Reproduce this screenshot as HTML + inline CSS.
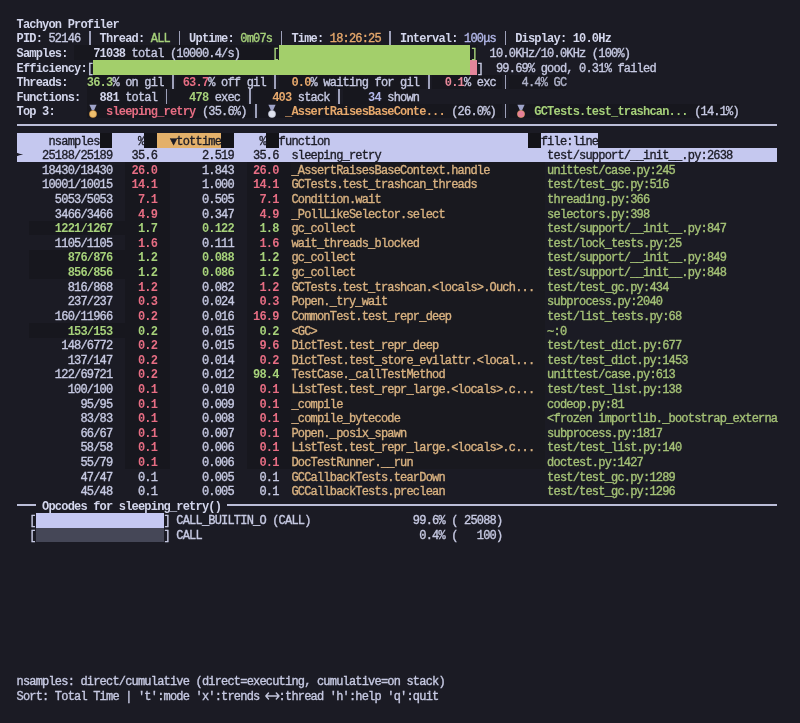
<!DOCTYPE html><html><head><meta charset="utf-8"><style>
html,body{margin:0;padding:0;background:#1b1b24;width:800px;height:723px;overflow:hidden}
#t{will-change:transform;position:relative;width:800px;height:723px;font-family:"Liberation Mono",monospace;font-size:12.0px;letter-spacing:-0.8082px}
.s{position:absolute;white-space:pre;height:14.6076px;line-height:14.6076px;-webkit-text-stroke:0.35px currentColor}
.bg{position:absolute;height:14.6076px}
.rule{position:absolute;height:1.6px}
.w{color:#c6c9e2} .wb{color:#d3d6ec;font-weight:bold;-webkit-text-stroke:0px} .b{color:#d3d6ec;font-weight:bold;-webkit-text-stroke:0px}
.bd{font-weight:bold;-webkit-text-stroke:0px} .g{color:#a6d17a} .r{color:#e66d83} .r2{color:#e8899b} .o{color:#e6a86c} .p{color:#b2b7e8}
.fn{color:#d9b281} .fl{color:#a4c176} .dk{color:#1c1c26} .dim{color:#aeb1c8} .sep{color:#9a9db2}

</style></head><body><div id="t">
<div class="bg" style="left:278.61px;top:45.47px;width:191.79px;background:#a3cf6b"></div>
<div class="bg" style="left:93.22px;top:60.07px;width:377.19px;background:#a3cf6b"></div>
<div class="bg" style="left:470.40px;top:60.07px;width:6.39px;background:#e3859a"></div>
<div class="bg" style="left:16.50px;top:133.11px;width:83.11px;background:#c5c8ef"></div>
<div class="bg" style="left:99.61px;top:133.11px;width:12.79px;background:#131318"></div>
<div class="bg" style="left:112.39px;top:133.11px;width:31.96px;background:#c5c8ef"></div>
<div class="bg" style="left:144.36px;top:133.11px;width:12.79px;background:#131318"></div>
<div class="bg" style="left:157.15px;top:133.11px;width:63.93px;background:#e3b06a"></div>
<div class="bg" style="left:221.08px;top:133.11px;width:12.79px;background:#131318"></div>
<div class="bg" style="left:233.86px;top:133.11px;width:31.96px;background:#c5c8ef"></div>
<div class="bg" style="left:265.83px;top:133.11px;width:12.79px;background:#131318"></div>
<div class="bg" style="left:278.61px;top:133.11px;width:249.33px;background:#c5c8ef"></div>
<div class="bg" style="left:527.94px;top:133.11px;width:12.79px;background:#131318"></div>
<div class="bg" style="left:540.73px;top:133.11px;width:57.54px;background:#c5c8ef"></div>
<div class="bg" style="left:16.50px;top:147.72px;width:760.77px;background:#c5c8ef"></div>
<div class="bg" style="left:74.04px;top:45.47px;width:204.58px;background:#17171e"></div>
<div class="bg" style="left:470.40px;top:45.47px;width:6.39px;background:#17171e"></div>
<div class="bg" style="left:86.82px;top:74.68px;width:83.11px;background:#17171e"></div>
<div class="bg" style="left:176.32px;top:74.68px;width:95.89px;background:#17171e"></div>
<div class="bg" style="left:278.61px;top:74.68px;width:147.04px;background:#17171e"></div>
<div class="bg" style="left:432.04px;top:74.68px;width:70.32px;background:#17171e"></div>
<div class="bg" style="left:508.76px;top:74.68px;width:57.54px;background:#17171e"></div>
<div class="bg" style="left:86.82px;top:89.29px;width:76.72px;background:#17171e"></div>
<div class="bg" style="left:169.93px;top:89.29px;width:76.72px;background:#17171e"></div>
<div class="bg" style="left:253.04px;top:89.29px;width:83.11px;background:#17171e"></div>
<div class="bg" style="left:342.54px;top:89.29px;width:76.72px;background:#17171e"></div>
<div class="bg" style="left:86.82px;top:103.90px;width:166.22px;background:#17171e"></div>
<div class="bg" style="left:259.43px;top:103.90px;width:242.93px;background:#17171e"></div>
<div class="bg" style="left:508.76px;top:103.90px;width:230.15px;background:#17171e"></div>
<div class="bg" style="left:125.18px;top:162.33px;width:44.75px;background:#17171e"></div>
<div class="bg" style="left:246.65px;top:162.33px;width:44.75px;background:#17171e"></div>
<div class="bg" style="left:291.40px;top:162.33px;width:253.16px;background:#19191f"></div>
<div class="bg" style="left:125.18px;top:176.93px;width:44.75px;background:#17171e"></div>
<div class="bg" style="left:246.65px;top:176.93px;width:44.75px;background:#17171e"></div>
<div class="bg" style="left:291.40px;top:176.93px;width:253.16px;background:#19191f"></div>
<div class="bg" style="left:125.18px;top:191.54px;width:44.75px;background:#17171e"></div>
<div class="bg" style="left:246.65px;top:191.54px;width:44.75px;background:#17171e"></div>
<div class="bg" style="left:291.40px;top:191.54px;width:253.16px;background:#19191f"></div>
<div class="bg" style="left:125.18px;top:206.15px;width:44.75px;background:#17171e"></div>
<div class="bg" style="left:246.65px;top:206.15px;width:44.75px;background:#17171e"></div>
<div class="bg" style="left:291.40px;top:206.15px;width:253.16px;background:#19191f"></div>
<div class="bg" style="left:125.18px;top:220.76px;width:44.75px;background:#17171e"></div>
<div class="bg" style="left:246.65px;top:220.76px;width:44.75px;background:#17171e"></div>
<div class="bg" style="left:291.40px;top:220.76px;width:253.16px;background:#19191f"></div>
<div class="bg" style="left:125.18px;top:235.36px;width:44.75px;background:#17171e"></div>
<div class="bg" style="left:246.65px;top:235.36px;width:44.75px;background:#17171e"></div>
<div class="bg" style="left:291.40px;top:235.36px;width:253.16px;background:#19191f"></div>
<div class="bg" style="left:125.18px;top:249.97px;width:44.75px;background:#17171e"></div>
<div class="bg" style="left:246.65px;top:249.97px;width:44.75px;background:#17171e"></div>
<div class="bg" style="left:291.40px;top:249.97px;width:253.16px;background:#19191f"></div>
<div class="bg" style="left:125.18px;top:264.58px;width:44.75px;background:#17171e"></div>
<div class="bg" style="left:246.65px;top:264.58px;width:44.75px;background:#17171e"></div>
<div class="bg" style="left:291.40px;top:264.58px;width:253.16px;background:#19191f"></div>
<div class="bg" style="left:125.18px;top:279.19px;width:44.75px;background:#17171e"></div>
<div class="bg" style="left:246.65px;top:279.19px;width:44.75px;background:#17171e"></div>
<div class="bg" style="left:291.40px;top:279.19px;width:253.16px;background:#19191f"></div>
<div class="bg" style="left:125.18px;top:293.79px;width:44.75px;background:#17171e"></div>
<div class="bg" style="left:246.65px;top:293.79px;width:44.75px;background:#17171e"></div>
<div class="bg" style="left:291.40px;top:293.79px;width:253.16px;background:#19191f"></div>
<div class="bg" style="left:125.18px;top:308.40px;width:44.75px;background:#17171e"></div>
<div class="bg" style="left:246.65px;top:308.40px;width:44.75px;background:#17171e"></div>
<div class="bg" style="left:291.40px;top:308.40px;width:253.16px;background:#19191f"></div>
<div class="bg" style="left:125.18px;top:323.01px;width:44.75px;background:#17171e"></div>
<div class="bg" style="left:246.65px;top:323.01px;width:44.75px;background:#17171e"></div>
<div class="bg" style="left:291.40px;top:323.01px;width:253.16px;background:#19191f"></div>
<div class="bg" style="left:125.18px;top:337.62px;width:44.75px;background:#17171e"></div>
<div class="bg" style="left:246.65px;top:337.62px;width:44.75px;background:#17171e"></div>
<div class="bg" style="left:291.40px;top:337.62px;width:253.16px;background:#19191f"></div>
<div class="bg" style="left:125.18px;top:352.22px;width:44.75px;background:#17171e"></div>
<div class="bg" style="left:246.65px;top:352.22px;width:44.75px;background:#17171e"></div>
<div class="bg" style="left:291.40px;top:352.22px;width:253.16px;background:#19191f"></div>
<div class="bg" style="left:125.18px;top:366.83px;width:44.75px;background:#17171e"></div>
<div class="bg" style="left:246.65px;top:366.83px;width:44.75px;background:#17171e"></div>
<div class="bg" style="left:291.40px;top:366.83px;width:253.16px;background:#19191f"></div>
<div class="bg" style="left:125.18px;top:381.44px;width:44.75px;background:#17171e"></div>
<div class="bg" style="left:246.65px;top:381.44px;width:44.75px;background:#17171e"></div>
<div class="bg" style="left:291.40px;top:381.44px;width:253.16px;background:#19191f"></div>
<div class="bg" style="left:125.18px;top:396.05px;width:44.75px;background:#17171e"></div>
<div class="bg" style="left:246.65px;top:396.05px;width:44.75px;background:#17171e"></div>
<div class="bg" style="left:291.40px;top:396.05px;width:253.16px;background:#19191f"></div>
<div class="bg" style="left:125.18px;top:410.66px;width:44.75px;background:#17171e"></div>
<div class="bg" style="left:246.65px;top:410.66px;width:44.75px;background:#17171e"></div>
<div class="bg" style="left:291.40px;top:410.66px;width:253.16px;background:#19191f"></div>
<div class="bg" style="left:125.18px;top:425.26px;width:44.75px;background:#17171e"></div>
<div class="bg" style="left:246.65px;top:425.26px;width:44.75px;background:#17171e"></div>
<div class="bg" style="left:291.40px;top:425.26px;width:253.16px;background:#19191f"></div>
<div class="bg" style="left:125.18px;top:439.87px;width:44.75px;background:#17171e"></div>
<div class="bg" style="left:246.65px;top:439.87px;width:44.75px;background:#17171e"></div>
<div class="bg" style="left:291.40px;top:439.87px;width:253.16px;background:#19191f"></div>
<div class="bg" style="left:125.18px;top:454.48px;width:44.75px;background:#17171e"></div>
<div class="bg" style="left:246.65px;top:454.48px;width:44.75px;background:#17171e"></div>
<div class="bg" style="left:291.40px;top:454.48px;width:253.16px;background:#19191f"></div>
<div class="bg" style="left:29.29px;top:220.76px;width:95.89px;background:#17171e"></div>
<div class="bg" style="left:29.29px;top:249.97px;width:95.89px;background:#17171e"></div>
<div class="bg" style="left:29.29px;top:264.58px;width:95.89px;background:#17171e"></div>
<div class="bg" style="left:29.29px;top:323.01px;width:95.89px;background:#17171e"></div>
<div class="bg" style="left:35.68px;top:512.91px;width:127.86px;background:#c5c8f2"></div>
<div class="bg" style="left:35.68px;top:527.52px;width:127.86px;background:#454757"></div>
<div class="rule" style="left:16.50px;top:124.41px;width:760.77px;background:#bbbed8"></div>
<div class="rule" style="left:16.50px;top:504.20px;width:19.18px;background:#bbbed8"></div>
<div class="rule" style="left:227.47px;top:504.20px;width:549.80px;background:#bbbed8"></div>
<div class="bg" style="left:89.02px;top:30.86px;width:1.7px;background:#9ea1ba"></div>
<div class="bg" style="left:178.52px;top:30.86px;width:1.7px;background:#9ea1ba"></div>
<div class="bg" style="left:280.81px;top:30.86px;width:1.7px;background:#9ea1ba"></div>
<div class="bg" style="left:389.49px;top:30.86px;width:1.7px;background:#9ea1ba"></div>
<div class="bg" style="left:504.57px;top:30.86px;width:1.7px;background:#9ea1ba"></div>
<div class="bg" style="left:172.13px;top:74.68px;width:1.7px;background:#9ea1ba"></div>
<div class="bg" style="left:274.42px;top:74.68px;width:1.7px;background:#9ea1ba"></div>
<div class="bg" style="left:427.85px;top:74.68px;width:1.7px;background:#9ea1ba"></div>
<div class="bg" style="left:504.57px;top:74.68px;width:1.7px;background:#9ea1ba"></div>
<div class="bg" style="left:165.74px;top:89.29px;width:1.7px;background:#9ea1ba"></div>
<div class="bg" style="left:248.85px;top:89.29px;width:1.7px;background:#9ea1ba"></div>
<div class="bg" style="left:338.35px;top:89.29px;width:1.7px;background:#9ea1ba"></div>
<div class="bg" style="left:255.24px;top:103.90px;width:1.7px;background:#9ea1ba"></div>
<div class="bg" style="left:504.57px;top:103.90px;width:1.7px;background:#9ea1ba"></div>
<div class="s b" style="left:16.50px;top:17.75px">Tachyon Profiler</div>
<div class="s b" style="left:16.50px;top:32.36px">PID:</div>
<div class="s w" style="left:48.47px;top:32.36px">52146</div>
<div class="s b" style="left:99.61px;top:32.36px">Thread:</div>
<div class="s g" style="left:150.75px;top:32.36px">ALL</div>
<div class="s b" style="left:189.11px;top:32.36px">Uptime:</div>
<div class="s g" style="left:240.25px;top:32.36px">0m07s</div>
<div class="s b" style="left:291.40px;top:32.36px">Time:</div>
<div class="s o" style="left:329.76px;top:32.36px">18:26:25</div>
<div class="s b" style="left:400.08px;top:32.36px">Interval:</div>
<div class="s p" style="left:464.01px;top:32.36px">100μs</div>
<div class="s b" style="left:515.15px;top:32.36px">Display:</div>
<div class="s wb" style="left:572.69px;top:32.36px">10.0Hz</div>
<div class="s b" style="left:16.50px;top:46.97px">Samples:</div>
<div class="s wb" style="left:93.22px;top:46.97px">71038</div>
<div class="s w" style="left:131.57px;top:46.97px">total (10000.4/s)</div>
<div class="s g" style="left:272.22px;top:46.97px">[</div>
<div class="s g" style="left:470.40px;top:46.97px">]</div>
<div class="s w" style="left:489.58px;top:46.97px">10.0KHz/10.0KHz (100%)</div>
<div class="s b" style="left:16.50px;top:61.57px">Efficiency:</div>
<div class="s w" style="left:86.82px;top:61.57px">[</div>
<div class="s w" style="left:476.80px;top:61.57px">]</div>
<div class="s w" style="left:495.97px;top:61.57px">99.69% good, 0.31% failed</div>
<div class="s b" style="left:16.50px;top:76.18px">Threads:</div>
<div class="s g bd" style="left:86.82px;top:76.18px">36.3</div>
<div class="s w" style="left:112.39px;top:76.18px">% on gil</div>
<div class="s r bd" style="left:182.72px;top:76.18px">63.7</div>
<div class="s w" style="left:208.29px;top:76.18px">% off gil</div>
<div class="s o bd" style="left:291.40px;top:76.18px">0.0</div>
<div class="s w" style="left:310.58px;top:76.18px">% waiting for gil</div>
<div class="s r2 bd" style="left:444.83px;top:76.18px">0.1</div>
<div class="s w" style="left:464.01px;top:76.18px">% exc</div>
<div class="s dim" style="left:521.55px;top:76.18px">4.4% GC</div>
<div class="s b" style="left:16.50px;top:90.79px">Functions:</div>
<div class="s wb" style="left:99.61px;top:90.79px">881</div>
<div class="s w" style="left:125.18px;top:90.79px">total</div>
<div class="s g bd" style="left:189.11px;top:90.79px">478</div>
<div class="s w" style="left:214.68px;top:90.79px">exec</div>
<div class="s o bd" style="left:272.22px;top:90.79px">403</div>
<div class="s w" style="left:297.79px;top:90.79px">stack</div>
<div class="s p bd" style="left:368.12px;top:90.79px">34</div>
<div class="s w" style="left:387.29px;top:90.79px">shown</div>
<div class="s b" style="left:16.50px;top:105.40px">Top 3:</div>
<div class="s r bd" style="left:106.00px;top:105.40px">sleeping_retry</div>
<div class="s w" style="left:201.90px;top:105.40px">(35.6%)</div>
<div class="s o bd" style="left:285.01px;top:105.40px">_AssertRaisesBaseConte...</div>
<div class="s w" style="left:451.22px;top:105.40px">(26.0%)</div>
<div class="s g bd" style="left:534.33px;top:105.40px">GCTests.test_trashcan...</div>
<div class="s w" style="left:694.16px;top:105.40px">(14.1%)</div>
<div class="s dk" style="left:48.47px;top:134.61px">nsamples</div>
<div class="s dk" style="left:137.97px;top:134.61px">%</div>
<div class="s dk" style="left:169.93px;top:134.61px">▼tottime</div>
<div class="s dk" style="left:259.43px;top:134.61px">%</div>
<div class="s dk" style="left:278.61px;top:134.61px">function</div>
<div class="s dk" style="left:540.73px;top:134.61px">file:line</div>
<div class="s dk" style="left:42.07px;top:149.22px">25188/25189</div>
<div class="s dk" style="left:131.57px;top:149.22px">35.6</div>
<div class="s dk" style="left:201.90px;top:149.22px">2.519</div>
<div class="s dk" style="left:253.04px;top:149.22px">35.6</div>
<div class="s dk" style="left:291.40px;top:149.22px">sleeping_retry</div>
<div class="s dk" style="left:547.12px;top:149.22px">test/support/__init__.py:2638</div>
<div class="s w" style="left:42.07px;top:163.83px">18430/18430</div>
<div class="s r bd" style="left:131.57px;top:163.83px">26.0</div>
<div class="s w" style="left:201.90px;top:163.83px">1.843</div>
<div class="s r bd" style="left:253.04px;top:163.83px">26.0</div>
<div class="s fn" style="left:291.40px;top:163.83px">_AssertRaisesBaseContext.handle</div>
<div class="s fl" style="left:547.12px;top:163.83px">unittest/case.py:245</div>
<div class="s w" style="left:42.07px;top:178.43px">10001/10015</div>
<div class="s r bd" style="left:131.57px;top:178.43px">14.1</div>
<div class="s w" style="left:201.90px;top:178.43px">1.000</div>
<div class="s r bd" style="left:253.04px;top:178.43px">14.1</div>
<div class="s fn" style="left:291.40px;top:178.43px">GCTests.test_trashcan_threads</div>
<div class="s fl" style="left:547.12px;top:178.43px">test/test_gc.py:516</div>
<div class="s w" style="left:54.86px;top:193.04px">5053/5053</div>
<div class="s r bd" style="left:137.97px;top:193.04px">7.1</div>
<div class="s w" style="left:201.90px;top:193.04px">0.505</div>
<div class="s r bd" style="left:259.43px;top:193.04px">7.1</div>
<div class="s fn" style="left:291.40px;top:193.04px">Condition.wait</div>
<div class="s fl" style="left:547.12px;top:193.04px">threading.py:366</div>
<div class="s w" style="left:54.86px;top:207.65px">3466/3466</div>
<div class="s r bd" style="left:137.97px;top:207.65px">4.9</div>
<div class="s w" style="left:201.90px;top:207.65px">0.347</div>
<div class="s r bd" style="left:259.43px;top:207.65px">4.9</div>
<div class="s fn" style="left:291.40px;top:207.65px">_PollLikeSelector.select</div>
<div class="s fl" style="left:547.12px;top:207.65px">selectors.py:398</div>
<div class="s g bd" style="left:54.86px;top:222.26px">1221/1267</div>
<div class="s g bd" style="left:137.97px;top:222.26px">1.7</div>
<div class="s g bd" style="left:201.90px;top:222.26px">0.122</div>
<div class="s g bd" style="left:259.43px;top:222.26px">1.8</div>
<div class="s fn" style="left:291.40px;top:222.26px">gc_collect</div>
<div class="s fl" style="left:547.12px;top:222.26px">test/support/__init__.py:847</div>
<div class="s w" style="left:54.86px;top:236.86px">1105/1105</div>
<div class="s r bd" style="left:137.97px;top:236.86px">1.6</div>
<div class="s w" style="left:201.90px;top:236.86px">0.111</div>
<div class="s r bd" style="left:259.43px;top:236.86px">1.6</div>
<div class="s fn" style="left:291.40px;top:236.86px">wait_threads_blocked</div>
<div class="s fl" style="left:547.12px;top:236.86px">test/lock_tests.py:25</div>
<div class="s g bd" style="left:67.64px;top:251.47px">876/876</div>
<div class="s g bd" style="left:137.97px;top:251.47px">1.2</div>
<div class="s g bd" style="left:201.90px;top:251.47px">0.088</div>
<div class="s g bd" style="left:259.43px;top:251.47px">1.2</div>
<div class="s fn" style="left:291.40px;top:251.47px">gc_collect</div>
<div class="s fl" style="left:547.12px;top:251.47px">test/support/__init__.py:849</div>
<div class="s g bd" style="left:67.64px;top:266.08px">856/856</div>
<div class="s g bd" style="left:137.97px;top:266.08px">1.2</div>
<div class="s g bd" style="left:201.90px;top:266.08px">0.086</div>
<div class="s g bd" style="left:259.43px;top:266.08px">1.2</div>
<div class="s fn" style="left:291.40px;top:266.08px">gc_collect</div>
<div class="s fl" style="left:547.12px;top:266.08px">test/support/__init__.py:848</div>
<div class="s w" style="left:67.64px;top:280.69px">816/868</div>
<div class="s r bd" style="left:137.97px;top:280.69px">1.2</div>
<div class="s w" style="left:201.90px;top:280.69px">0.082</div>
<div class="s r bd" style="left:259.43px;top:280.69px">1.2</div>
<div class="s fn" style="left:291.40px;top:280.69px">GCTests.test_trashcan.&lt;locals&gt;.Ouch...</div>
<div class="s fl" style="left:547.12px;top:280.69px">test/test_gc.py:434</div>
<div class="s w" style="left:67.64px;top:295.29px">237/237</div>
<div class="s r bd" style="left:137.97px;top:295.29px">0.3</div>
<div class="s w" style="left:201.90px;top:295.29px">0.024</div>
<div class="s r bd" style="left:259.43px;top:295.29px">0.3</div>
<div class="s fn" style="left:291.40px;top:295.29px">Popen._try_wait</div>
<div class="s fl" style="left:547.12px;top:295.29px">subprocess.py:2040</div>
<div class="s w" style="left:54.86px;top:309.90px">160/11966</div>
<div class="s r bd" style="left:137.97px;top:309.90px">0.2</div>
<div class="s w" style="left:201.90px;top:309.90px">0.016</div>
<div class="s r bd" style="left:253.04px;top:309.90px">16.9</div>
<div class="s fn" style="left:291.40px;top:309.90px">CommonTest.test_repr_deep</div>
<div class="s fl" style="left:547.12px;top:309.90px">test/list_tests.py:68</div>
<div class="s g bd" style="left:67.64px;top:324.51px">153/153</div>
<div class="s g bd" style="left:137.97px;top:324.51px">0.2</div>
<div class="s w" style="left:201.90px;top:324.51px">0.015</div>
<div class="s g bd" style="left:259.43px;top:324.51px">0.2</div>
<div class="s fn" style="left:291.40px;top:324.51px">&lt;GC&gt;</div>
<div class="s fl" style="left:547.12px;top:324.51px">~:0</div>
<div class="s w" style="left:61.25px;top:339.12px">148/6772</div>
<div class="s r bd" style="left:137.97px;top:339.12px">0.2</div>
<div class="s w" style="left:201.90px;top:339.12px">0.015</div>
<div class="s r bd" style="left:259.43px;top:339.12px">9.6</div>
<div class="s fn" style="left:291.40px;top:339.12px">DictTest.test_repr_deep</div>
<div class="s fl" style="left:547.12px;top:339.12px">test/test_dict.py:677</div>
<div class="s w" style="left:67.64px;top:353.72px">137/147</div>
<div class="s r bd" style="left:137.97px;top:353.72px">0.2</div>
<div class="s w" style="left:201.90px;top:353.72px">0.014</div>
<div class="s r bd" style="left:259.43px;top:353.72px">0.2</div>
<div class="s fn" style="left:291.40px;top:353.72px">DictTest.test_store_evilattr.&lt;local...</div>
<div class="s fl" style="left:547.12px;top:353.72px">test/test_dict.py:1453</div>
<div class="s w" style="left:54.86px;top:368.33px">122/69721</div>
<div class="s r bd" style="left:137.97px;top:368.33px">0.2</div>
<div class="s w" style="left:201.90px;top:368.33px">0.012</div>
<div class="s g bd" style="left:253.04px;top:368.33px">98.4</div>
<div class="s fn" style="left:291.40px;top:368.33px">TestCase._callTestMethod</div>
<div class="s fl" style="left:547.12px;top:368.33px">unittest/case.py:613</div>
<div class="s w" style="left:67.64px;top:382.94px">100/100</div>
<div class="s r bd" style="left:137.97px;top:382.94px">0.1</div>
<div class="s w" style="left:201.90px;top:382.94px">0.010</div>
<div class="s r bd" style="left:259.43px;top:382.94px">0.1</div>
<div class="s fn" style="left:291.40px;top:382.94px">ListTest.test_repr_large.&lt;locals&gt;.c...</div>
<div class="s fl" style="left:547.12px;top:382.94px">test/test_list.py:138</div>
<div class="s w" style="left:80.43px;top:397.55px">95/95</div>
<div class="s r bd" style="left:137.97px;top:397.55px">0.1</div>
<div class="s w" style="left:201.90px;top:397.55px">0.009</div>
<div class="s r bd" style="left:259.43px;top:397.55px">0.1</div>
<div class="s fn" style="left:291.40px;top:397.55px">_compile</div>
<div class="s fl" style="left:547.12px;top:397.55px">codeop.py:81</div>
<div class="s w" style="left:80.43px;top:412.16px">83/83</div>
<div class="s r bd" style="left:137.97px;top:412.16px">0.1</div>
<div class="s w" style="left:201.90px;top:412.16px">0.008</div>
<div class="s r bd" style="left:259.43px;top:412.16px">0.1</div>
<div class="s fn" style="left:291.40px;top:412.16px">_compile_bytecode</div>
<div class="s fl" style="left:547.12px;top:412.16px">&lt;frozen importlib._bootstrap_externa</div>
<div class="s w" style="left:80.43px;top:426.76px">66/67</div>
<div class="s r bd" style="left:137.97px;top:426.76px">0.1</div>
<div class="s w" style="left:201.90px;top:426.76px">0.007</div>
<div class="s r bd" style="left:259.43px;top:426.76px">0.1</div>
<div class="s fn" style="left:291.40px;top:426.76px">Popen._posix_spawn</div>
<div class="s fl" style="left:547.12px;top:426.76px">subprocess.py:1817</div>
<div class="s w" style="left:80.43px;top:441.37px">58/58</div>
<div class="s r bd" style="left:137.97px;top:441.37px">0.1</div>
<div class="s w" style="left:201.90px;top:441.37px">0.006</div>
<div class="s r bd" style="left:259.43px;top:441.37px">0.1</div>
<div class="s fn" style="left:291.40px;top:441.37px">ListTest.test_repr_large.&lt;locals&gt;.c...</div>
<div class="s fl" style="left:547.12px;top:441.37px">test/test_list.py:140</div>
<div class="s w" style="left:80.43px;top:455.98px">55/79</div>
<div class="s r bd" style="left:137.97px;top:455.98px">0.1</div>
<div class="s w" style="left:201.90px;top:455.98px">0.006</div>
<div class="s r bd" style="left:259.43px;top:455.98px">0.1</div>
<div class="s fn" style="left:291.40px;top:455.98px">DocTestRunner.__run</div>
<div class="s fl" style="left:547.12px;top:455.98px">doctest.py:1427</div>
<div class="s w" style="left:80.43px;top:470.59px">47/47</div>
<div class="s w" style="left:137.97px;top:470.59px">0.1</div>
<div class="s w" style="left:201.90px;top:470.59px">0.005</div>
<div class="s w" style="left:259.43px;top:470.59px">0.1</div>
<div class="s fn" style="left:291.40px;top:470.59px">GCCallbackTests.tearDown</div>
<div class="s fl" style="left:547.12px;top:470.59px">test/test_gc.py:1289</div>
<div class="s w" style="left:80.43px;top:485.19px">45/48</div>
<div class="s w" style="left:137.97px;top:485.19px">0.1</div>
<div class="s w" style="left:201.90px;top:485.19px">0.005</div>
<div class="s w" style="left:259.43px;top:485.19px">0.1</div>
<div class="s fn" style="left:291.40px;top:485.19px">GCCallbackTests.preclean</div>
<div class="s fl" style="left:547.12px;top:485.19px">test/test_gc.py:1296</div>
<div class="s b" style="left:42.07px;top:499.80px">Opcodes for sleeping_retry()</div>
<div class="s w" style="left:29.29px;top:514.41px">[</div>
<div class="s w" style="left:163.54px;top:514.41px">]</div>
<div class="s w" style="left:176.32px;top:514.41px">CALL_BUILTIN_O (CALL)</div>
<div class="s w" style="left:412.87px;top:514.41px">99.6% ( 25088)</div>
<div class="s w" style="left:29.29px;top:529.02px">[</div>
<div class="s w" style="left:163.54px;top:529.02px">]</div>
<div class="s w" style="left:176.32px;top:529.02px">CALL</div>
<div class="s w" style="left:419.26px;top:529.02px">0.4% (   100)</div>
<div class="s w" style="left:16.50px;top:675.09px">nsamples: direct/cumulative (direct=executing, cumulative=on stack)</div>
<div class="s w" style="left:16.50px;top:689.70px">Sort: Total Time | &#x27;t&#x27;:mode &#x27;x&#x27;:trends</div>
<div class="s w" style="left:278.61px;top:689.70px">:thread &#x27;h&#x27;:help &#x27;q&#x27;:quit</div>
<svg style="position:absolute;left:88.10px;top:103.90px" width="10" height="14" viewBox="0 0 10 14"><path d="M1.4 0.8 L8.6 0.8 L6 6.4 L4 6.4 Z" fill="#9ea3c9"/><circle cx="5" cy="10" r="3.6" fill="#efc06e" stroke="#c98a3a" stroke-width="0.6"/></svg>
<svg style="position:absolute;left:267.20px;top:103.90px" width="10" height="14" viewBox="0 0 10 14"><path d="M1.4 0.8 L8.6 0.8 L6 6.4 L4 6.4 Z" fill="#9ea3c9"/><circle cx="5" cy="10" r="3.6" fill="#dfe2ee" stroke="#b8bccc" stroke-width="0.6"/></svg>
<svg style="position:absolute;left:516.30px;top:103.90px" width="10" height="14" viewBox="0 0 10 14"><path d="M1.4 0.8 L8.6 0.8 L6 6.4 L4 6.4 Z" fill="#9ea3c9"/><circle cx="5" cy="10" r="3.6" fill="#e77f98" stroke="#e0a060" stroke-width="0.6"/></svg>
<svg style="position:absolute;left:264px;top:690px" width="17" height="12" viewBox="0 0 17 12"><path d="M4.5 3 L1.8 6 L4.5 9 M1.8 6 L15 6 M12.3 3 L15 6 L12.3 9" stroke="#c3c6dc" stroke-width="1.4" fill="none" stroke-linecap="round" stroke-linejoin="round"/></svg>
<svg style="position:absolute;left:16px;top:151px" width="8" height="7" viewBox="0 0 8 7"><path d="M0 1.4 Q3.4 2.9 7.2 3.5 Q3.4 4.1 0 5.6 Z" fill="#1c1c26"/></svg>
</div></body></html>
